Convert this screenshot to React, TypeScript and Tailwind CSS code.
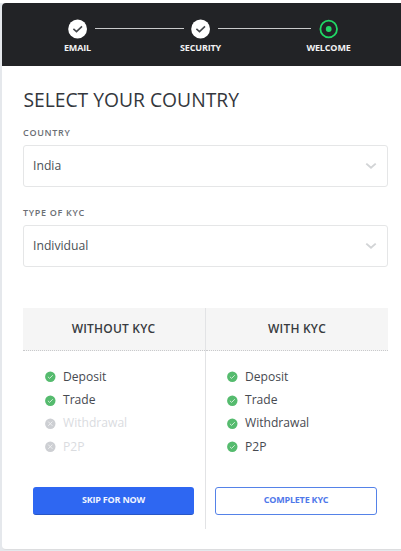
import React from "react";

function StepCheck() {
  return (
    <svg width="20" height="20" viewBox="0 0 20 20" fill="none">
      <circle cx="9.6" cy="10" r="9.4" fill="#fff" />
      <path d="M5.4 9.9 8.5 12.6 14 7.4" stroke="#44474b" strokeWidth="1.6" />
    </svg>
  );
}

function StepCurrent() {
  return (
    <svg width="20" height="20" viewBox="0 0 20 20" fill="none">
      <circle cx="9.7" cy="10" r="8.3" stroke="#20d865" strokeWidth="1.8" />
      <circle cx="9.7" cy="10" r="2.9" fill="#20d865" />
    </svg>
  );
}

function Step({ label, current = false }: { label: string; current?: boolean }) {
  return (
    <div className="flex w-5 shrink-0 flex-col items-center">
      {current ? <StepCurrent /> : <StepCheck />}
      <span className="mt-[3px] -ml-px text-[9px] leading-3 font-bold tracking-[-0.15px] whitespace-nowrap text-[#f2f2f3]">{label}</span>
    </div>
  );
}

function Field({ label, value }: { label: string; value: string }) {
  return (
    <div>
      <div className="h-3 text-[9px] leading-3 font-semibold tracking-[0.7px] text-[#6a6e74]">{label}</div>
      <div className="mt-[6px] flex h-[42px] items-center justify-between rounded-[3px] border border-[#e5e6e7] pr-[10px] pl-[9px]">
        <span className="text-[12.2px] leading-4 text-[#4b4f55]">{value}</span>
        <svg width="12" height="8" viewBox="0 0 12 8" fill="none">
          <path d="M1.3 1.6 6 5.8 10.7 1.6" stroke="#d2d4d6" strokeWidth="1.9" />
        </svg>
      </div>
    </div>
  );
}

function Feature({ name, enabled = true }: { name: string; enabled?: boolean }) {
  return (
    <li className={`flex h-[23.4px] items-center gap-[7px] text-[12.1px] ${enabled ? "text-[#474a51]" : "text-[#dadcdf]"}`}>
      <svg width="11" height="11" viewBox="0 0 11 11" fill="none" className="shrink-0">
        <circle cx="5.3" cy="5.7" r="5.2" fill={enabled ? "#55bb6e" : "#cdcfd3"} />
        {enabled ? (
          <path d="M2.9 5.8 4.6 7.4 7.8 4.2" stroke="#d9f1df" strokeWidth="0.9" />
        ) : (
          <path d="M3.2 3.6 7.4 7.8M7.4 3.6 3.2 7.8" stroke="#f1f2f3" strokeWidth="0.9" />
        )}
      </svg>
      {name}
    </li>
  );
}

export default function App() {
  return (
    <div className="h-[551px] w-[401px] overflow-hidden bg-[#e5e8ec] pt-[3px] pl-[2px] font-['Open_Sans','Noto_Sans',sans-serif] shadow-[inset_0_3px_0_#fff]">
      <main className="h-[547px] rounded-l-[4px] border-b border-[#dcdddf] bg-white">
        <header className="flex h-[63px] items-start rounded-tl-[4px] bg-[#222326] pt-4 pl-[66px]">
          <Step label="EMAIL" />
          <div className="mt-[9px] ml-[7px] h-px w-[89px] bg-[#c9cacb]" />
          <div className="ml-[7px]"><Step label="SECURITY" /></div>
          <div className="mt-[9px] ml-[7px] h-px w-[93px] bg-[#c9cacb]" />
          <div className="ml-2"><Step label="WELCOME" current /></div>
        </header>
        <div className="pr-[13px] pl-[21px]">
          <h1 className="pt-[21px] pl-[0.4px] text-[19.3px] leading-[26px] whitespace-nowrap text-[#34373d]">SELECT YOUR COUNTRY</h1>
          <div className="mt-[14px] flex flex-col gap-5">
            <Field label="COUNTRY" value="India" />
            <Field label="TYPE OF KYC" value="Individual" />
          </div>
          <section className="mt-[41px] grid h-[221px] grid-cols-[183px_1fr]">
            <div className="border-r border-[#e2e3e5]">
              <h2 className="flex h-[43px] items-center justify-center border-b border-dotted border-[#c9cacc] bg-[#f5f5f5] pr-px text-[12px] font-semibold tracking-[0.2px] text-[#383b40]">WITHOUT KYC</h2>
              <ul className="pt-[14px] pl-[22px]">
                <Feature name="Deposit" />
                <Feature name="Trade" />
                <Feature name="Withdrawal" enabled={false} />
                <Feature name="P2P" enabled={false} />
              </ul>
              <button className="mt-[28px] ml-[10px] flex h-7 w-[161px] items-center justify-center rounded-[3px] border-b border-[#2856c5] bg-[#2e67f2] text-[9px] font-bold tracking-[-0.2px] text-[#f0f4ff]">SKIP FOR NOW</button>
            </div>
            <div>
              <h2 className="flex h-[43px] items-center justify-center border-b border-dotted border-[#c9cacc] bg-[#f5f5f5] text-[12px] font-semibold tracking-[0.2px] text-[#383b40]">WITH KYC</h2>
              <ul className="pt-[14px] pl-[21px]">
                <Feature name="Deposit" />
                <Feature name="Trade" />
                <Feature name="Withdrawal" />
                <Feature name="P2P" />
              </ul>
              <button className="mt-[28px] ml-[9px] flex h-7 w-[162px] items-center justify-center rounded-[3px] border border-[#5582e8] bg-white pb-px text-[9px] font-bold tracking-[-0.2px] text-[#5078ea]">COMPLETE KYC</button>
            </div>
          </section>
        </div>
      </main>
    </div>
  );
}
